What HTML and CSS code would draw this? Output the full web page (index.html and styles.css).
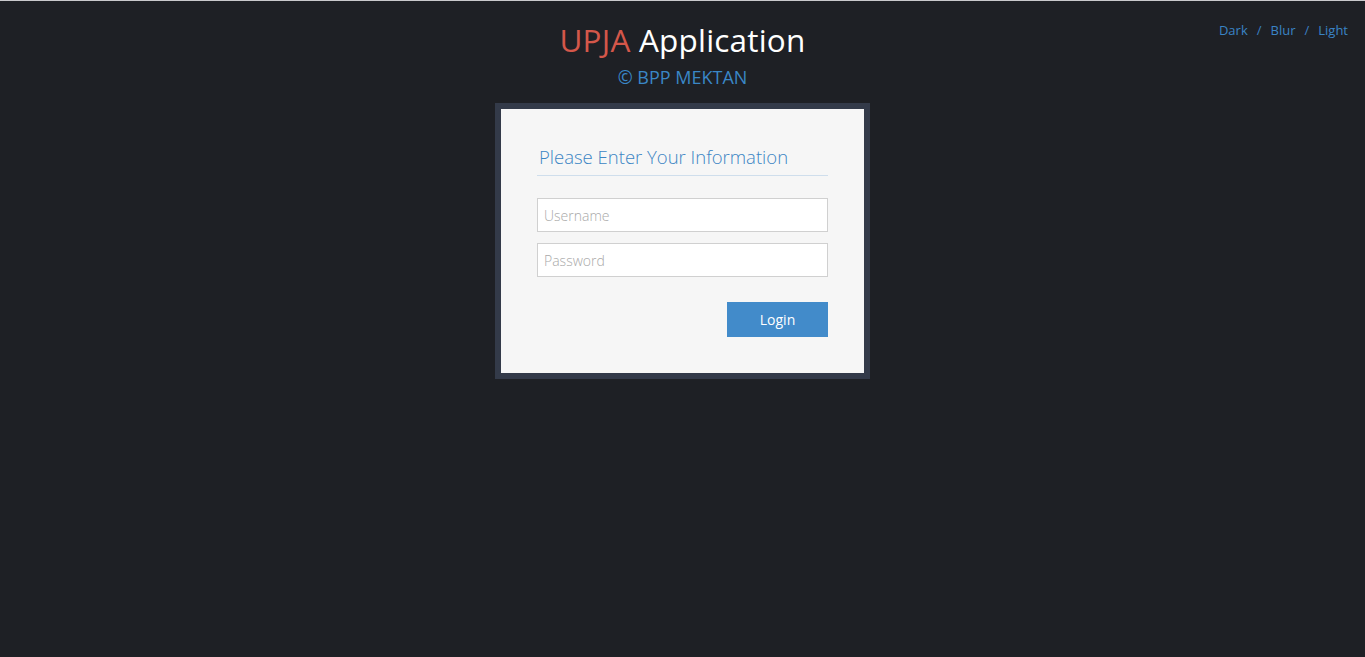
FILE: index.html
```html
<!DOCTYPE html>
<html lang="en">
<head>
<meta charset="utf-8">
<title>UPJA Application</title>
<link rel="stylesheet" href="styles.css">
</head>
<body>
<div class="page">
  <nav class="themes">
    <a href="#">Dark</a><span class="sep">/</span><a href="#">Blur</a><span class="sep">/</span><a href="#">Light</a>
  </nav>
  <header class="brand">
    <h1 class="title"><span class="accent">UPJA</span> Application</h1>
    <div class="subtitle">© BPP MEKTAN</div>
  </header>
  <main class="card">
    <div class="card-inner">
      <h2 class="card-title">Please Enter Your Information</h2>
      <form class="form">
        <input class="field" type="text" placeholder="Username">
        <input class="field" type="password" placeholder="Password">
        <div class="actions">
          <button class="btn" type="button">Login</button>
        </div>
      </form>
    </div>
  </main>
</div>
</body>
</html>
```

FILE: styles.css
```css
html, body {
  margin: 0;
  padding: 0;
  height: 100%;
}
body {
  background: #1e2025;
  border-top: 1px solid #c9c9cc;
  box-sizing: border-box;
  font-family: "Open Sans", "Liberation Sans", sans-serif;
  font-weight: 300;
}
.page {
  display: flex;
  flex-direction: column;
  align-items: center;
  padding-top: 15px;
}
.themes {
  position: absolute;
  top: 21px;
  right: 17px;
  font-size: 13px;
  font-weight: 400;
  color: #3a7fc0;
}
.themes a {
  color: #3a84c6;
  text-decoration: none;
}
.themes .sep {
  margin: 0 9px;
  color: #3a7fc0;
}
.brand {
  text-align: center;
}
.title {
  margin: 0;
  font-size: 31.5px;
  font-weight: 400;
  line-height: 48px;
  color: #ffffff;
  letter-spacing: 0.2px;
}
.accent {
  color: #d4574a;
}
.subtitle {
  font-size: 18px;
  font-weight: 400;
  color: #3a87c7;
  line-height: 24px;
  margin-top: 1px;
}
.card {
  margin-top: 14px;
  width: 363px;
  border: 6px solid #333a49;
  background: #f6f6f6;
}
.card-inner {
  padding: 34px 36px 36px 36px;
}
.card-title {
  margin: 0;
  padding: 0 0 4px 2px;
  font-size: 18.5px;
  font-weight: 300;
  line-height: 28px;
  color: #3b85c4;
  border-bottom: 1px solid #cfdeec;
}
.form {
  display: flex;
  flex-direction: column;
  gap: 11px;
  margin-top: 22px;
}
.field {
  box-sizing: border-box;
  width: 100%;
  height: 34px;
  margin: 0;
  padding: 0 6px;
  border: 1px solid #d0d0d0;
  background: #ffffff;
  font-family: "Open Sans", "Liberation Sans", sans-serif;
  font-weight: 300;
  font-size: 14px;
  line-height: 32px;
  color: #555;
  outline: none;
}
.field::placeholder {
  color: #a9a9a9;
}
.actions {
  display: flex;
  justify-content: flex-end;
  margin-top: 14px;
}
.btn {
  width: 101px;
  height: 35px;
  border: none;
  background: #428bca;
  color: #ffffff;
  font-family: "Open Sans", "Liberation Sans", sans-serif;
  font-weight: 400;
  font-size: 14px;
  cursor: pointer;
}
```
